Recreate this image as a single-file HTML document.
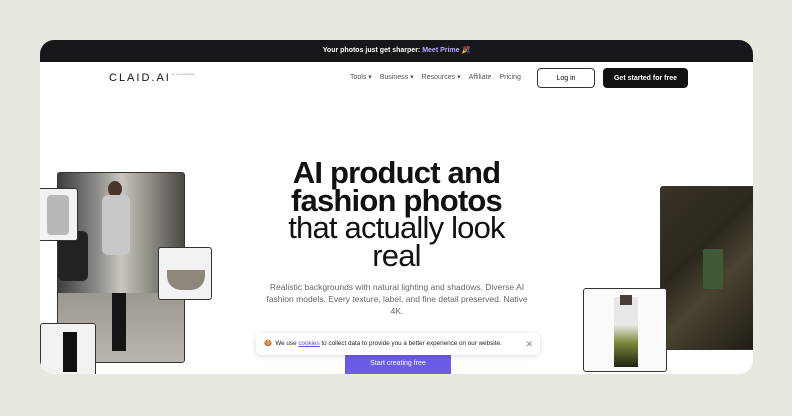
<!DOCTYPE html>
<html><head><style>
*{margin:0;padding:0;box-sizing:border-box}
body{width:792px;height:416px;background:#e8e8e0;font-family:"Liberation Sans",sans-serif;position:relative;overflow:hidden}
.card{position:absolute;left:40px;top:40px;width:713px;height:334px;background:#fff;border-radius:14px;overflow:hidden}
.top{height:22px;background:#17171b;color:#fff;font-size:7px;font-weight:bold;text-align:center;line-height:21px}
.top span{color:#b6a9ff}
.abs{position:absolute}
.nav{line-height:10px;font-size:7px}
.nav a{font-size:7px;color:#555;margin-right:8px}
.h{position:absolute;left:0;width:713px;text-align:center;color:#111;letter-spacing:-0.8px}
.ph{position:absolute;border:1px solid #333;border-radius:3px;overflow:hidden}
</style></head><body>
<div class="card">
<div class="top">Your photos just get sharper: <span>Meet Prime 🎉</span></div>
<div class="abs" style="left:69px;top:32px;font-size:11px;line-height:12px;letter-spacing:2px;color:#111">CLAID.AI</div>
<div class="abs" style="left:132px;top:32px;font-size:3px;line-height:4px;color:#999">by Let's Enhance</div>
<div class="abs nav" style="left:310px;top:33px"><a>Tools ▾</a><a>Business ▾</a><a>Resources ▾</a><a>Affiliate</a><a>Pricing</a></div>
<div class="abs" style="left:497px;top:28px;width:58px;height:20px;border:1px solid #333;border-radius:4px;font-size:7px;text-align:center;line-height:20px">Log in</div>
<div class="abs" style="left:563px;top:28px;width:85px;height:20px;background:#111;color:#fff;border-radius:4px;font-size:7px;font-weight:bold;text-align:center;line-height:21px">Get started for free</div>
<div class="h" style="top:119px;font-size:31px;font-weight:bold;line-height:28px">AI product and<br>fashion photos</div>
<div class="h" style="top:174px;font-size:31px;line-height:28px">that actually look<br>real</div>
<div class="h" style="top:241px;font-size:8.5px;color:#666;line-height:12px;letter-spacing:0;left:226px;width:262px">Realistic backgrounds with natural lighting and shadows. Diverse AI fashion models. Every texture, label, and fine detail preserved. Native 4K.</div>
<div class="abs" style="left:305px;top:312px;width:106px;height:22px;background:#6b5ce7;color:#fff;font-size:7px;text-align:center;line-height:24px">Start creating free</div>
<div class="abs" style="left:216px;top:293px;width:284px;height:22px;background:#fff;border-radius:5px;box-shadow:0 1px 6px rgba(0,0,0,.15);font-size:6.3px;line-height:22px;padding-left:8px;color:#222">🍪&nbsp; We use <u style="color:#5a4de0">cookies</u> to collect data to provide you a better experience on our website. <span style="position:absolute;right:7px;color:#888;font-size:9px">✕</span></div>
<div class="ph" style="left:17px;top:132px;width:128px;height:191px;background:linear-gradient(90deg,#3e3e40,#8a8886 30%,#c9c6c0 50%,#8a8680 75%,#4a4844);">
 <div class="abs" style="left:0;top:120px;width:128px;height:71px;background:linear-gradient(#9a9890,#bab7b0)"></div>
 <div class="abs" style="left:0;top:58px;width:30px;height:50px;background:#222;border-radius:6px"></div>
 <div class="abs" style="left:50px;top:8px;width:14px;height:16px;background:#4a3528;border-radius:50%"></div>
 <div class="abs" style="left:44px;top:22px;width:28px;height:60px;background:#c8c8c8;border-radius:6px"></div>
 <div class="abs" style="left:54px;top:120px;width:14px;height:58px;background:#151515"></div>
</div>
<div class="ph" style="left:-2px;top:148px;width:40px;height:53px;background:#f2f2f2"><div class="abs" style="left:8px;top:6px;width:22px;height:40px;background:#b8b8b8;border-radius:4px"></div></div>
<div class="ph" style="left:118px;top:207px;width:54px;height:53px;background:#f2f2f2"><div class="abs" style="left:8px;top:22px;width:38px;height:20px;background:#8d877a;border-radius:0 0 14px 14px"></div></div>
<div class="ph" style="left:0;top:283px;width:56px;height:55px;background:#f2f2f2"><div class="abs" style="left:22px;top:8px;width:14px;height:40px;background:#111"></div></div>
<div class="ph" style="left:620px;top:146px;width:96px;height:164px;background:linear-gradient(135deg,#3a3325,#2a281d 40%,#4a4330 60%,#1e1c15)"><div class="abs" style="left:42px;top:62px;width:20px;height:40px;background:#3f5a35;border-radius:2px"></div></div>
<div class="ph" style="left:543px;top:248px;width:84px;height:84px;background:#fafafa"><div class="abs" style="left:30px;top:8px;width:24px;height:70px;background:linear-gradient(#e8e8e8 40%,#7b8a3a 65%,#1e2214)"></div><div class="abs" style="left:36px;top:6px;width:12px;height:10px;background:#4a3c36"></div></div>
</div>
</body></html>
